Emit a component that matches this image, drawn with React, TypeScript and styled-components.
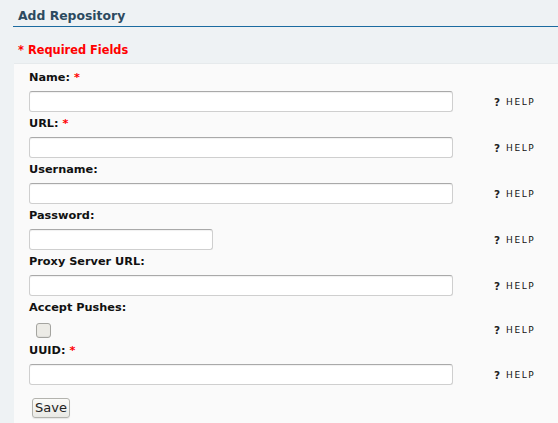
import React from "react";
import styled, { createGlobalStyle } from "styled-components";

const Global = createGlobalStyle`
  html, body { margin: 0; padding: 0; background: #eef2f4; }
  body { font-family: "DejaVu Sans", "Liberation Sans", sans-serif; color: #111; }
  * { box-sizing: border-box; }
`;

const Page = styled.div`
  width: 558px;
  height: 423px;
  overflow: hidden;
  padding-left: 14px;
  background: #eef2f4;
`;

const Header = styled.h2`
  margin: 0 0 0 -1px;
  padding: 8px 0 2px 5px;
  font-size: 12.4px;
  line-height: 16px;
  font-weight: bold;
  color: #2c4a5f;
  border-bottom: 1px solid #1b6ba0;
`;

const Required = styled.div`
  margin: 15px 0 5px 0;
  padding-left: 4px;
  font-size: 11.4px;
  line-height: 16px;
  font-weight: bold;
  color: #f00;
`;

const Panel = styled.form`
  background: #fafafa;
  border-top: 1px solid #e6eaec;
  padding: 5px 0 20px 15px;
  min-height: 400px;
`;

const Field = styled.div`
  display: grid;
  grid-template-columns: 465px auto;
  align-items: center;
  margin-bottom: 3px;
`;

const Label = styled.label`
  grid-column: 1 / span 2;
  display: block;
  font-size: 11.3px;
  line-height: 18px;
  font-weight: bold;
  color: #111;
  margin-bottom: 4px;
`;

const Star = styled.span`
  color: #f00;
  margin-left: 4px;
`;

const TextInput = styled.input<{ $w: number }>`
  width: ${(p) => p.$w}px;
  height: 21px;
  margin: 0;
  padding: 2px 4px;
  background: #fff;
  border: 1px solid #cfcfcf;
  border-top-color: #a9a9a9;
  border-radius: 3px;
  box-shadow: inset 0 1px 1px rgba(0, 0, 0, 0.06);
  font-family: "DejaVu Sans", sans-serif;
  font-size: 11px;
`;

const CheckCell = styled.div`
  height: 18px;
  display: flex;
  align-items: center;
  padding-left: 7px;
`;

const Check = styled.input`
  appearance: none;
  -webkit-appearance: none;
  width: 15px;
  height: 15px;
  margin: 0;
  background: #ecebe6;
  border: 1px solid #a4a4a0;
  border-radius: 3px;
  box-shadow: inset 0 -1px 1px rgba(0, 0, 0, 0.05);
`;

const Help = styled.a`
  display: flex;
  align-items: center;
  gap: 6px;
  color: #111;
  text-decoration: none;
`;

const Q = styled.span`
  font-size: 10.5px;
  font-weight: bold;
  color: #222;
`;

const HelpText = styled.span`
  font-size: 9px;
  letter-spacing: 1.6px;
  color: #111;
`;

const SaveButton = styled.button`
  margin: 10px 0 0 3px;
  height: 20px;
  padding: 0 2px;
  font-family: "DejaVu Sans", sans-serif;
  font-size: 13px;
  line-height: 18px;
  color: #222;
  background: linear-gradient(#fbfbf9, #e9e9e5);
  border: 1px solid #b3b3ae;
  border-radius: 3px;
  box-shadow: 0 1px 1px rgba(0, 0, 0, 0.08);
`;

type F = { label: string; req?: boolean; w?: number; check?: boolean };

const fields: F[] = [
  { label: "Name:", req: true, w: 424 },
  { label: "URL:", req: true, w: 424 },
  { label: "Username:", w: 424 },
  { label: "Password:", w: 184 },
  { label: "Proxy Server URL:", w: 424 },
  { label: "Accept Pushes:", check: true },
  { label: "UUID:", req: true, w: 424 },
];

export default function App() {
  return (
    <Page>
      <Global />
      <Header>Add Repository</Header>
      <Required>* Required Fields</Required>
      <Panel onSubmit={(e) => e.preventDefault()}>
        {fields.map((f) => (
          <Field key={f.label}>
            <Label>
              {f.label}
              {f.req && <Star>*</Star>}
            </Label>
            {f.check ? (
              <CheckCell>
                <Check type="checkbox" />
              </CheckCell>
            ) : (
              <TextInput
                $w={f.w ?? 424}
                type={f.label === "Password:" ? "password" : "text"}
              />
            )}
            <Help href="#">
              <Q>?</Q>
              <HelpText>HELP</HelpText>
            </Help>
          </Field>
        ))}
        <SaveButton type="submit">Save</SaveButton>
      </Panel>
    </Page>
  );
}
